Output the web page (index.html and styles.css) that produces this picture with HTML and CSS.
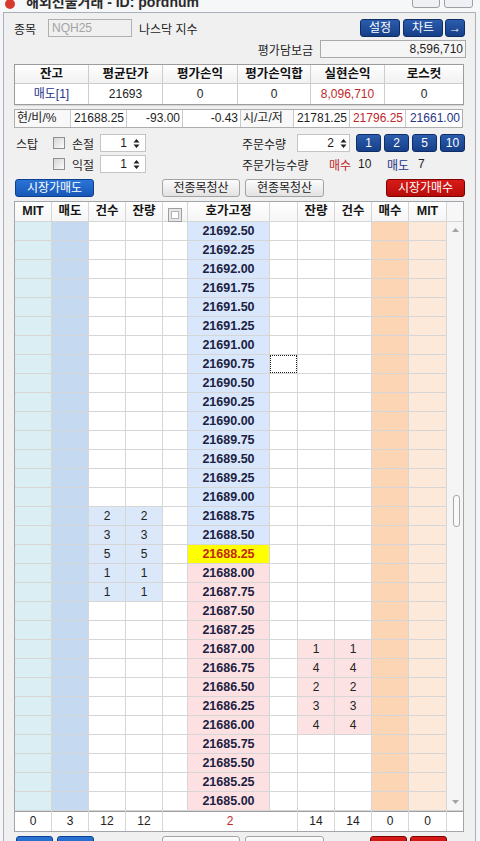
FILE: index.html
```html
<!DOCTYPE html>
<html lang="ko">
<head>
<meta charset="utf-8">
<title>해외선물거래</title>
<link rel="stylesheet" href="styles.css">
</head>
<body>
<div class="titlebar">
  <span class="app-icon"></span>
  <span class="title">해외선물거래 - ID: pordnum</span>
  <span class="grow"></span>
  <span class="winbtn wb-min">—</span>
  <span class="winbtn wb-close">✕</span>
</div>
<div class="panel">
  <div class="row1">
    <span class="lbl-code">종목</span>
    <span class="code-box">NQH25</span>
    <span class="code-name">나스닥 지수</span>
    <span class="grow"></span>
    <span class="btn navy b-set">설정</span>
    <span class="btn navy b-chart">차트</span>
    <span class="btn navy b-arrow">→</span>
  </div>
  <div class="row2">
    <span class="lbl-margin">평가담보금</span>
    <span class="val-box">8,596,710</span>
  </div>

  <div class="t1">
    <div class="th">잔고</div><div class="th">평균단가</div><div class="th">평가손익</div><div class="th">평가손익합</div><div class="th">실현손익</div><div class="th">로스컷</div>
    <div class="td navy-t">매도[1]</div><div class="td">21693</div><div class="td">0</div><div class="td">0</div><div class="td red-t">8,096,710</div><div class="td">0</div>
  </div>

  <div class="t2">
    <div class="lb">현/비/%</div><div class="nv">21688.25</div><div class="nv">-93.00</div><div class="nv">-0.43</div>
    <div class="lb">시/고/저</div><div class="nv">21781.25</div><div class="nv red-t">21796.25</div><div class="nv navy-t">21661.00</div>
  </div>

  <div class="ctl-row first">
    <div class="ctl-l">
      <span class="lbl-stop">스탑</span>
      <span class="cb"></span>
      <span class="cb-lbl">손절</span>
      <span class="spin sp1"><span class="sv">1</span><svg class="arr" width="7" height="11" viewBox="0 0 7 11"><path d="M3.5 1 L6.5 4.5 L0.5 4.5Z M0.5 6.5 L6.5 6.5 L3.5 10Z" fill="#222"/></svg></span>
    </div>
    <div class="ctl-r">
      <span class="lbl-qty">주문수량</span>
      <span class="spin sp2"><span class="sv">2</span><svg class="arr" width="7" height="11" viewBox="0 0 7 11"><path d="M3.5 1 L6.5 4.5 L0.5 4.5Z M0.5 6.5 L6.5 6.5 L3.5 10Z" fill="#222"/></svg></span>
      <span class="btn navy nb nb1">1</span>
      <span class="btn navy nb">2</span>
      <span class="btn navy nb">5</span>
      <span class="btn navy nb">10</span>
    </div>
  </div>

  <div class="ctl-row second">
    <div class="ctl-l">
      <span class="lbl-stop"></span>
      <span class="cb"></span>
      <span class="cb-lbl">익절</span>
      <span class="spin sp1"><span class="sv">1</span><svg class="arr" width="7" height="11" viewBox="0 0 7 11"><path d="M3.5 1 L6.5 4.5 L0.5 4.5Z M0.5 6.5 L6.5 6.5 L3.5 10Z" fill="#222"/></svg></span>
    </div>
    <div class="ctl-r">
      <span class="lbl-avail">주문가능수량</span>
      <span class="av-buy red-t">매수</span>
      <span class="av-n1">10</span>
      <span class="av-sell navy-t">매도</span>
      <span class="av-n2">7</span>
    </div>
  </div>

  <div class="ctl-row third">
    <div class="ctl-l">
      <span class="btn blue wide ml1">시장가매도</span>
      <span class="grow"></span>
      <span class="btn gray wide2">전종목청산</span>
    </div>
    <div class="ctl-r">
      <span class="btn gray wide ml5">현종목청산</span>
      <span class="grow"></span>
      <span class="btn red wide">시장가매수</span>
    </div>
  </div>

  <div class="book">
    <div class="r hd"><div>MIT</div><div>매도</div><div>건수</div><div>잔량</div><div><span class="hcb"></span></div><div>호가고정</div><div></div><div>잔량</div><div>건수</div><div>매수</div><div>MIT</div><div class="hsb"></div></div>

    <div class="sb">
      <svg class="sb-up" width="7" height="4" viewBox="0 0 7 4"><path d="M0 4 L3.5 0 L7 4Z" fill="#a3a3a3"/></svg>
      <div class="sb-thumb"></div>
      <div class="grow"></div>
      <svg class="sb-dn" width="7" height="4" viewBox="0 0 7 4"><path d="M0 0 L7 0 L3.5 4Z" fill="#a3a3a3"/></svg>
    </div>

    <div class="r ask"><div></div><div></div><div></div><div></div><div></div><div>21692.50</div><div></div><div></div><div></div><div></div><div></div></div>
    <div class="r ask"><div></div><div></div><div></div><div></div><div></div><div>21692.25</div><div></div><div></div><div></div><div></div><div></div></div>
    <div class="r ask"><div></div><div></div><div></div><div></div><div></div><div>21692.00</div><div></div><div></div><div></div><div></div><div></div></div>
    <div class="r ask"><div></div><div></div><div></div><div></div><div></div><div>21691.75</div><div></div><div></div><div></div><div></div><div></div></div>
    <div class="r ask"><div></div><div></div><div></div><div></div><div></div><div>21691.50</div><div></div><div></div><div></div><div></div><div></div></div>
    <div class="r ask"><div></div><div></div><div></div><div></div><div></div><div>21691.25</div><div></div><div></div><div></div><div></div><div></div></div>
    <div class="r ask"><div></div><div></div><div></div><div></div><div></div><div>21691.00</div><div></div><div></div><div></div><div></div><div></div></div>
    <div class="r ask"><div></div><div></div><div></div><div></div><div></div><div>21690.75</div><div class="focus"></div><div></div><div></div><div></div><div></div></div>
    <div class="r ask"><div></div><div></div><div></div><div></div><div></div><div>21690.50</div><div></div><div></div><div></div><div></div><div></div></div>
    <div class="r ask"><div></div><div></div><div></div><div></div><div></div><div>21690.25</div><div></div><div></div><div></div><div></div><div></div></div>
    <div class="r ask"><div></div><div></div><div></div><div></div><div></div><div>21690.00</div><div></div><div></div><div></div><div></div><div></div></div>
    <div class="r ask"><div></div><div></div><div></div><div></div><div></div><div>21689.75</div><div></div><div></div><div></div><div></div><div></div></div>
    <div class="r ask"><div></div><div></div><div></div><div></div><div></div><div>21689.50</div><div></div><div></div><div></div><div></div><div></div></div>
    <div class="r ask"><div></div><div></div><div></div><div></div><div></div><div>21689.25</div><div></div><div></div><div></div><div></div><div></div></div>
    <div class="r ask"><div></div><div></div><div></div><div></div><div></div><div>21689.00</div><div></div><div></div><div></div><div></div><div></div></div>
    <div class="r ask"><div></div><div></div><div class="qs">2</div><div class="qs">2</div><div></div><div>21688.75</div><div></div><div></div><div></div><div></div><div></div></div>
    <div class="r ask"><div></div><div></div><div class="qs">3</div><div class="qs">3</div><div></div><div>21688.50</div><div></div><div></div><div></div><div></div><div></div></div>
    <div class="r cur"><div></div><div></div><div class="qs">5</div><div class="qs">5</div><div></div><div>21688.25</div><div></div><div></div><div></div><div></div><div></div></div>
    <div class="r bid"><div></div><div></div><div class="qs">1</div><div class="qs">1</div><div></div><div>21688.00</div><div></div><div></div><div></div><div></div><div></div></div>
    <div class="r bid"><div></div><div></div><div class="qs">1</div><div class="qs">1</div><div></div><div>21687.75</div><div></div><div></div><div></div><div></div><div></div></div>
    <div class="r bid"><div></div><div></div><div></div><div></div><div></div><div>21687.50</div><div></div><div></div><div></div><div></div><div></div></div>
    <div class="r bid"><div></div><div></div><div></div><div></div><div></div><div>21687.25</div><div></div><div></div><div></div><div></div><div></div></div>
    <div class="r bid"><div></div><div></div><div></div><div></div><div></div><div>21687.00</div><div></div><div class="qb">1</div><div class="qb">1</div><div></div><div></div></div>
    <div class="r bid"><div></div><div></div><div></div><div></div><div></div><div>21686.75</div><div></div><div class="qb">4</div><div class="qb">4</div><div></div><div></div></div>
    <div class="r bid"><div></div><div></div><div></div><div></div><div></div><div>21686.50</div><div></div><div class="qb">2</div><div class="qb">2</div><div></div><div></div></div>
    <div class="r bid"><div></div><div></div><div></div><div></div><div></div><div>21686.25</div><div></div><div class="qb">3</div><div class="qb">3</div><div></div><div></div></div>
    <div class="r bid"><div></div><div></div><div></div><div></div><div></div><div>21686.00</div><div></div><div class="qb">4</div><div class="qb">4</div><div></div><div></div></div>
    <div class="r bid"><div></div><div></div><div></div><div></div><div></div><div>21685.75</div><div></div><div></div><div></div><div></div><div></div></div>
    <div class="r bid"><div></div><div></div><div></div><div></div><div></div><div>21685.50</div><div></div><div></div><div></div><div></div><div></div></div>
    <div class="r bid"><div></div><div></div><div></div><div></div><div></div><div>21685.25</div><div></div><div></div><div></div><div></div><div></div></div>
    <div class="r bid"><div></div><div></div><div></div><div></div><div></div><div>21685.00</div><div></div><div></div><div></div><div></div><div></div></div>

    <div class="r ft"><div>0</div><div>3</div><div>12</div><div>12</div><div class="ft-mid red-t">2</div><div>14</div><div>14</div><div>0</div><div>0</div><div></div></div>
  </div>

  <div class="bottom-row">
    <div class="ctl-l">
      <span class="btn blue sm ml2"></span>
      <span class="btn blue sm ml4"></span>
      <span class="grow"></span>
      <span class="btn gray wide2"></span>
    </div>
    <div class="ctl-r">
      <span class="btn gray wide ml5"></span>
      <span class="grow"></span>
      <span class="btn red sm"></span>
      <span class="btn red sm ml3 mr18"></span>
    </div>
  </div>
</div>
</body>
</html>
```

FILE: styles.css
```css
* { box-sizing: border-box; }
html, body { margin: 0; padding: 0; }
body {
  width: 480px;
  height: 841px;
  overflow: hidden;
  background: #f4f5f7;
  font-family: "Liberation Sans", "Noto Sans CJK KR", sans-serif;
  font-size: 12px;
  color: #1e1e1e;
}
.grow { flex: 1; }

/* title bar (cut off at top) */
.titlebar {
  height: 12px;
  overflow: hidden;
  display: flex;
  align-items: flex-end;
  background: #f6f7f9;
}
.app-icon {
  flex: none;
  width: 10px;
  height: 10px;
  margin: 0 0 3px 5px;
  border-radius: 50%;
  background: #d63a2e;
}
.title {
  margin-left: 11px;
  font-size: 14px;
  font-weight: bold;
  line-height: 20px;
  color: #2a2a2a;
  white-space: nowrap;
}
.winbtn {
  flex: none;
  height: 22px;
  margin-bottom: 4px;
  border: 1px solid #9aa0a8;
  border-radius: 3px;
  background: #eef0f3;
  color: #555;
  font-size: 11px;
  line-height: 12px;
  text-align: center;
}
.wb-min { width: 28px; }
.wb-close { width: 29px; margin-left: 4px; margin-right: 7px; }

/* main panel */
.panel {
  margin-left: 3px;
  width: 473px;
  height: 829px;
  border: 1px solid #a9b0b8;
  border-bottom: none;
  background: #f0f0f0;
  padding: 6px 10px 0 10px;
}

.row1 {
  display: flex;
  align-items: center;
  height: 18px;
}
.lbl-code { width: 34px; }
.code-box {
  width: 84px;
  height: 18px;
  border: 1px solid #b0b0b0;
  background: #f0f0f0;
  color: #a3a3a3;
  padding-left: 3px;
  line-height: 16px;
}
.code-name { margin-left: 7px; }

.btn {
  flex: none;
  display: inline-flex;
  align-items: center;
  justify-content: center;
  height: 18px;
  border-radius: 3px;
  font-size: 12px;
  line-height: 16px;
}
.navy {
  background: linear-gradient(#2b5cae, #173f88);
  border: 1px solid #0e2d66;
  color: #fff;
}
.blue {
  background: linear-gradient(#2a74d6, #1758b8);
  border: 1px solid #0c3f8e;
  color: #fff;
}
.red {
  background: linear-gradient(#d81c18, #b70c0a);
  border: 1px solid #7e0000;
  color: #fff;
}
.gray {
  background: linear-gradient(#fcfcfc, #e2e2e2);
  border: 1px solid #a4a4a4;
  color: #222;
}
.b-set { width: 40px; }
.b-chart { width: 40px; margin-left: 3px; }
.b-arrow { width: 20px; margin-left: 2px; }

.row2 {
  display: flex;
  justify-content: flex-end;
  align-items: center;
  height: 18px;
  margin-top: 3px;
}
.val-box {
  width: 146px;
  height: 18px;
  margin-left: 7px;
  margin-right: -1px;
  border: 1px solid #a9a9a9;
  background: #f5f5f5;
  text-align: right;
  padding-right: 2px;
  line-height: 16px;
}

/* position table */
.t1 {
  margin-top: 6px;
  width: 450px;
  display: grid;
  grid-template-columns: 73px 73px 74px 72px 73px 78px;
  grid-template-rows: 18px 20px;
  gap: 1px;
  border: 1px solid #9c9c9c;
  background: #cdcdcd;
  box-shadow: 0 1px 0 #d8d8d8;
}
.th {
  background: linear-gradient(#ffffff, #f1f1f1);
  font-weight: bold;
  font-size: 12.5px;
  line-height: 18px;
  text-align: center;
  color: #111;
}
.td {
  background: #fff;
  line-height: 20px;
  text-align: center;
}
.navy-t { color: #1f3488; }
.red-t { color: #c0282a; }

/* price row */
.t2 {
  margin-top: 4px;
  width: 449px;
  height: 19px;
  display: grid;
  grid-template-columns: 55px 55px 55px 57px 52px 55px 55px 56px;
  gap: 1px;
  border: 1px solid #aeaeae;
  background: #c9c9c9;
}
.t2 > div { line-height: 17px; background: #fff; }
.t2 .lb { padding-left: 2px; background: #f8f8f8; }
.t2 .nv { text-align: right; padding-right: 2px; }

/* control rows */
.ctl-row, .bottom-row {
  display: flex;
  height: 18px;
}
.ctl-row.first { margin-top: 6px; }
.ctl-row.second { margin-top: 3px; }
.ctl-row.third { margin-top: 6px; }
.ctl-l {
  width: 226px;
  display: flex;
  align-items: center;
}
.ctl-r {
  flex: 1;
  display: flex;
  align-items: center;
}
.lbl-stop { width: 39px; padding-left: 2px; }
.cb {
  flex: none;
  width: 12px;
  height: 12px;
  border: 1px solid #8e8f8f;
  background: linear-gradient(135deg, #d6d6d6, #fbfbfb);
}
.cb-lbl { margin-left: 7px; width: 24px; }
.spin {
  flex: none;
  height: 18px;
  display: flex;
  align-items: center;
  justify-content: flex-end;
  border: 1px solid #c4c4c4;
  background: #fff;
}
.sp1 { width: 46px; margin-left: 4px; padding-right: 5px; }
.sp2 { width: 53px; padding-right: 2px; }
.sv { margin-right: 6px; }
.lbl-qty { width: 57px; padding-left: 2px; }
.nb { width: 25px; margin-left: 3px; }
.nb1 { margin-left: 6px; }

.lbl-avail { padding-left: 2px; width: 89px; }
.av-buy { width: 24px; }
.av-n1 { margin-left: 5px; width: 13px; }
.av-sell { margin-left: 16px; width: 24px; }
.av-n2 { margin-left: 7px; }

.wide { width: 79px; }
.wide2 { width: 78px; }
.ml1 { margin-left: 1px; }
.ml2 { margin-left: 2px; }
.ml3 { margin-left: 3px; }
.ml4 { margin-left: 4px; }
.ml5 { margin-left: 5px; }
.mr18 { margin-right: 18px; }
.sm { width: 37px; }

/* order book */
.book {
  margin-top: 4px;
  width: 450px;
  display: grid;
  grid-template-columns: 36px 36px 36px 36px 24px 81px 27px 36px 36px 36px 37px 16px;
  grid-template-rows: 19px repeat(31, 18px) 20px;
  gap: 1px;
  border: 1px solid #a2a6ab;
  background: #d6d6d6;
}
.r { display: contents; }
.r > div {
  text-align: center;
  line-height: 18px;
  background: #fff;
  color: #222;
}
.r > :nth-child(1) { background: #dbeef4; }
.r > :nth-child(2) { background: #c5d9f1; }
.r > :nth-child(6) {
  font-weight: bold;
  font-size: 12.5px;
  color: #1c2142;
}
.r > :nth-child(10) { background: #fcd5b5; }
.r > :nth-child(11) { background: #fde9da; }
.ask > :nth-child(6) { background: #d8e7fb; }
.bid > :nth-child(6) { background: #fde1e2; }
.cur > :nth-child(6) { background: #ffff00; color: #c3280c; }
.r > .qs { background: #dbe8f9; }
.r > .qb { background: #fde2e3; }
.r > .focus { outline: 1px dotted #222; outline-offset: -1px; }

.hd > div {
  background: linear-gradient(#ffffff, #f5f5f5);
  font-weight: bold;
  font-size: 12.5px;
  line-height: 19px;
  color: #151515;
}
.hd > :nth-child(1), .hd > :nth-child(2), .hd > :nth-child(10), .hd > :nth-child(11) {
  background: linear-gradient(#ffffff, #f5f5f5);
}
.hd > :nth-child(6) { color: #151515; }
.hd > .hsb { background: #f7f7f7; }
.hd > :nth-child(5) {
  display: flex;
  justify-content: center;
  align-items: flex-end;
}
.hcb {
  width: 14px;
  height: 14px;
  margin-bottom: -1px;
  border: 1px solid #a0a0a0;
  background: #fff;
  box-shadow: inset 0 0 0 2px #e6e6e6, inset 0 0 0 3px #b4b4b4;
}

.sb {
  grid-column: 12;
  grid-row: 2 / span 31;
  background: #f5f5f5;
  display: flex;
  flex-direction: column;
  align-items: center;
}
.sb-up { margin-top: 6px; flex: none; }
.sb-thumb {
  flex: none;
  width: 7px;
  height: 32px;
  margin-top: 263px;
  margin-left: 2px;
  border: 1px solid #a9a9a9;
  border-radius: 3px;
  background: #fafafa;
}
.sb-dn { margin-bottom: 6px; flex: none; }

.ft > div {
  background: #fff;
  line-height: 18px;
  border-top: 1px solid #9e9e9e;
}
.ft > :nth-child(1), .ft > :nth-child(2) { background: #fff; }
.ft > :nth-child(6) { font-weight: normal; font-size: 12px; color: #222; }
.ft > :nth-child(10), .ft > :nth-child(11) { background: #fff; }
.ft > .ft-mid { grid-column: span 3; color: #c0282a; }

.bottom-row { margin-top: 4px; }
```
